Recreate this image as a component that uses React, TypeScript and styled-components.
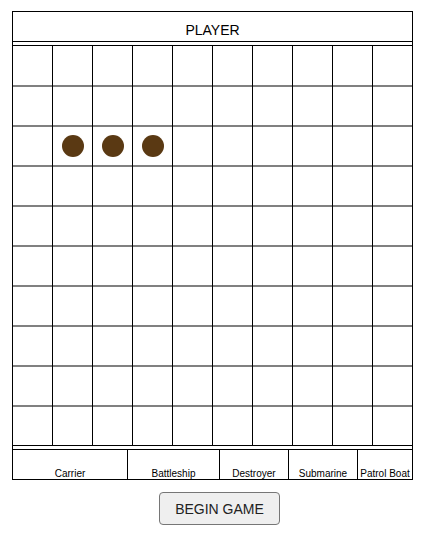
import React from "react";
import styled, { createGlobalStyle } from "styled-components";

const Global = createGlobalStyle`
  html, body { margin: 0; padding: 0; background: #fff; }
  body { font-family: "Liberation Sans", Arial, sans-serif; color: #000; }
  * { box-sizing: border-box; }
`;

const Page = styled.div`
  padding: 11px 0 0 12px;
`;

const Frame = styled.div`
  width: 401px;
  border: 1px solid #000;
`;

const Header = styled.div`
  height: 30px;
  padding-top: 10px;
  line-height: 16px;
  font-size: 14px;
  text-align: center;
  border-bottom: 1px solid #000;
`;

const Board = styled.div`
  margin-top: 3px;
  border-top: 1px solid #000;
  border-bottom: 1px solid #000;
  display: grid;
  grid-template-columns: 39px repeat(9, 40px);
  grid-template-rows: 39px repeat(9, 38px);
  row-gap: 2px;
  background: repeating-linear-gradient(to right, #808080 0 39px, #000 39px 40px);
`;

const Cell = styled.div<{ $first: boolean }>`
  background: #fff;
  border-left: ${(p) => (p.$first ? "none" : "1px solid #000")};
  display: flex;
  align-items: center;
  justify-content: center;
`;

const Peg = styled.div`
  width: 22px;
  height: 22px;
  border-radius: 50%;
  background: #5a3913;
`;

const ShipBar = styled.div`
  margin-top: 3px;
  border-top: 1px solid #000;
  display: grid;
  grid-template-columns: 114px 92px 69px 69px 55px;
  height: 30px;
`;

const Ship = styled.div<{ $first: boolean }>`
  border-left: ${(p) => (p.$first ? "none" : "1px solid #000")};
  display: flex;
  align-items: flex-end;
  justify-content: center;
  font-size: 10px;
  line-height: 11px;
  white-space: nowrap;
`;

const ButtonRow = styled.div`
  padding: 12px 0 0 147px;
`;

const BeginButton = styled.button`
  width: 121px;
  height: 33px;
  border: 1px solid #767676;
  border-radius: 4px;
  background: #efefef;
  font-family: "Liberation Sans", Arial, sans-serif;
  font-size: 14px;
  color: #222;
  padding: 0;
  cursor: pointer;
`;

const pegs = new Set(["2-1", "2-2", "2-3"]);
const ships = ["Carrier", "Battleship", "Destroyer", "Submarine", "Patrol Boat"];

export default function App() {
  const cells: React.ReactNode[] = [];
  for (let r = 0; r < 10; r++) {
    for (let c = 0; c < 10; c++) {
      cells.push(
        <Cell key={`${r}-${c}`} $first={c === 0}>
          {pegs.has(`${r}-${c}`) && <Peg />}
        </Cell>
      );
    }
  }
  return (
    <>
      <Global />
      <Page>
        <Frame>
          <Header>PLAYER</Header>
          <Board>{cells}</Board>
          <ShipBar>
            {ships.map((s, i) => (
              <Ship key={s} $first={i === 0}>
                {s}
              </Ship>
            ))}
          </ShipBar>
        </Frame>
        <ButtonRow>
          <BeginButton>BEGIN GAME</BeginButton>
        </ButtonRow>
      </Page>
    </>
  );
}
